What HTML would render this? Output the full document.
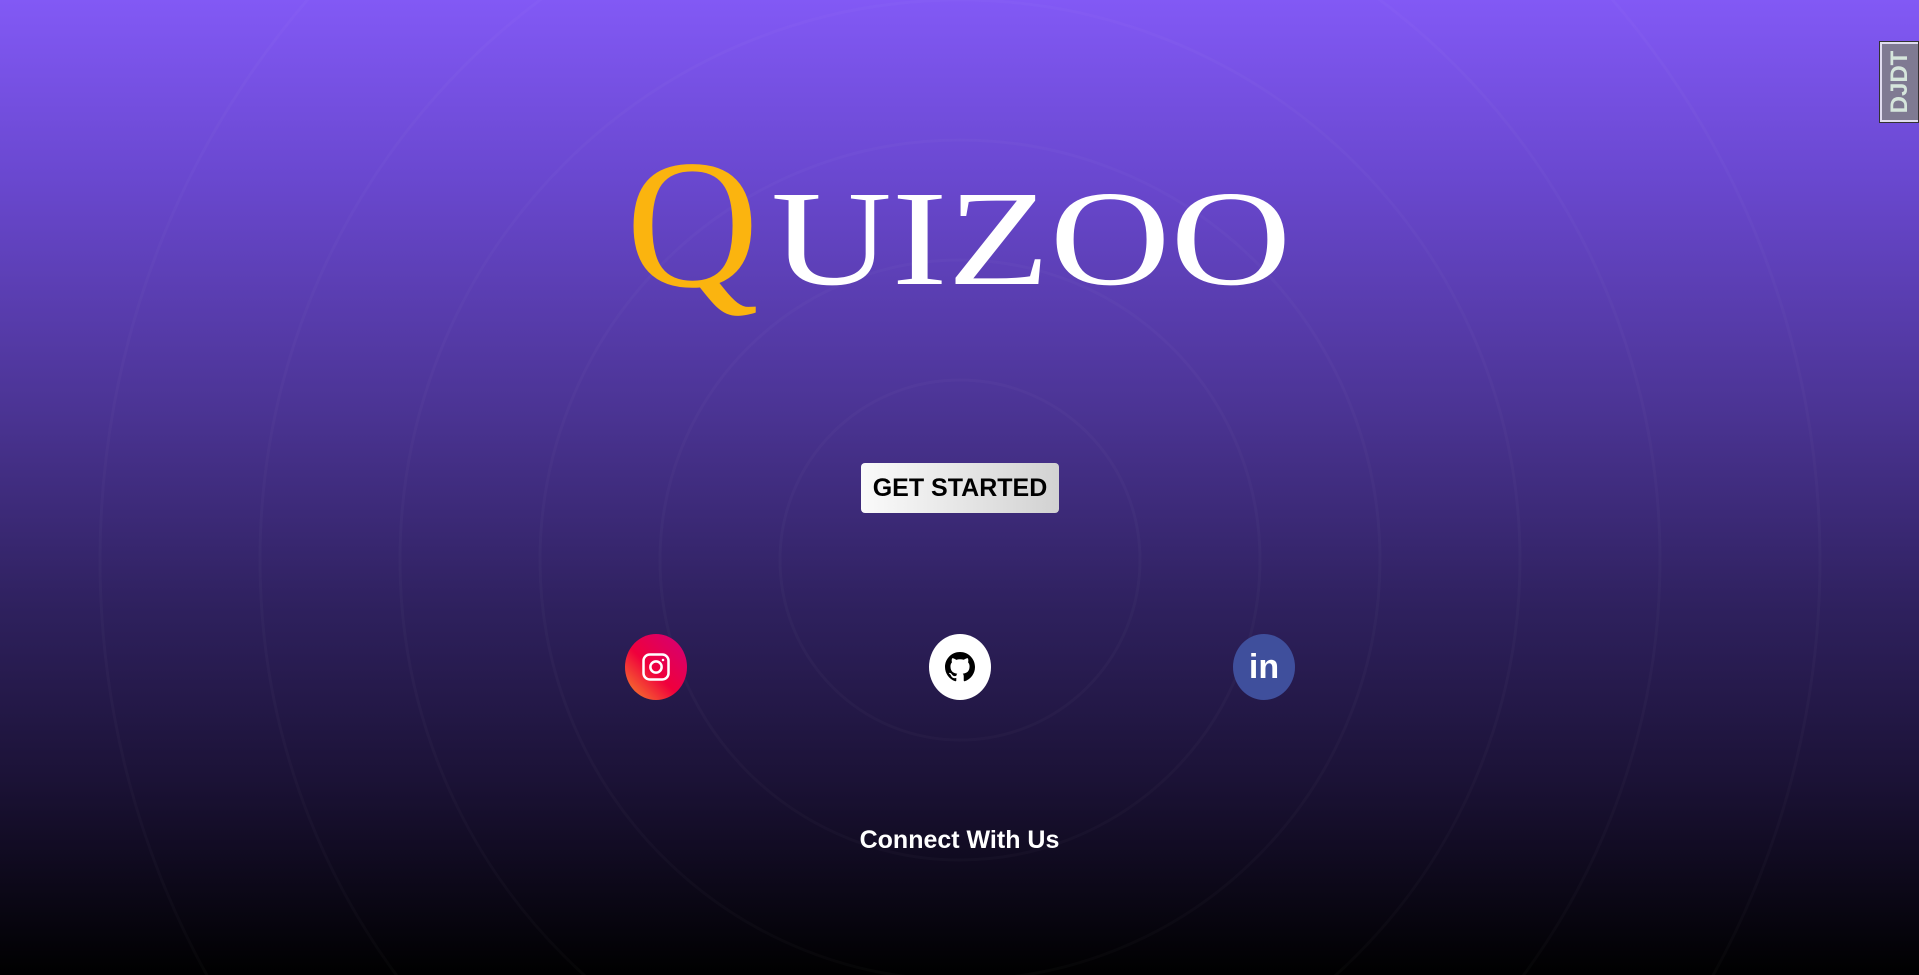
<!DOCTYPE html>
<html><head><meta charset="utf-8"><style>
html,body{margin:0;padding:0;width:1919px;height:975px;overflow:hidden}
body{background:linear-gradient(180deg,#8259f5 0%,#6a48d0 18%,#4b3494 42%,#2f215f 62%,#1b1236 80%,#000 100%);position:relative;font-family:"Liberation Sans",sans-serif}
.rings{position:absolute;left:0;top:0}
.q,.r{position:absolute;font-family:"Liberation Serif",serif;line-height:1;white-space:nowrap}
.q{left:626px;top:132px;color:#fbb40f;font-size:184px}
.r{left:771px;top:171px;color:#fff;font-size:136px;transform:scaleX(1.23);transform-origin:0 0}
.btn{position:absolute;left:861px;top:463px;width:198px;height:50px;border-radius:4px;background:linear-gradient(90deg,#fafafa,#d2d2d2);font-weight:bold;font-size:25px;color:#000;text-align:center;line-height:50px}
.ic{position:absolute;top:634px;width:62px;height:66px;border-radius:50%;display:flex;align-items:center;justify-content:center}
.cw{position:absolute;left:0;width:1919px;top:825px;text-align:center;color:#fff;font-weight:bold;font-size:25px;line-height:30px}
.dj{position:absolute;left:1880px;top:42px;width:36px;height:76px;background:#7f7a92;border:2px solid #e0dcef;border-right:none;box-shadow:0 0 0 1px #333}
.dj span{position:absolute;left:50%;top:50%;transform:translate(-50%,-50%) rotate(-90deg);color:#d6e6dc;font-weight:bold;font-size:24px;white-space:nowrap}
</style></head><body>
<svg class="rings" width="1919" height="975"><g fill="none" stroke="#fff" stroke-opacity="0.025" stroke-width="3">
<circle cx="960" cy="560" r="180"/><circle cx="960" cy="560" r="300"/><circle cx="960" cy="560" r="420"/><circle cx="960" cy="560" r="560"/><circle cx="960" cy="560" r="700"/><circle cx="960" cy="560" r="860"/></g></svg>
<div class="q">Q</div>
<div class="r">UIZOO</div>
<div class="btn">GET STARTED</div>
<div class="ic" style="left:625px;background:linear-gradient(225deg,#d1007a,#f0003c 55%,#f78c2a)">
<svg width="30" height="30" viewBox="0 0 24 24" fill="none" stroke="#fff" stroke-width="2"><rect x="2" y="2" width="20" height="20" rx="5"/><circle cx="12" cy="12" r="4.5"/><circle cx="17.6" cy="6.4" r="1" fill="#fff" stroke="none"/></svg></div>
<div class="ic" style="left:929px;background:#fff">
<svg width="30" height="30" viewBox="0 0 16 16"><path fill="#000" d="M8 0C3.58 0 0 3.58 0 8c0 3.540 2.290 6.530 5.470 7.590.4.07.55-.17.55-.38v-1.330c-2.230.48-2.700-1.070-2.700-1.070-.36-.92-.89-1.170-.89-1.170-.73-.5.06-.49.06-.49.8.06 1.230.83 1.230.83.72 1.220 1.870.87 2.330.66.07-.52.28-.87.5-1.070-1.780-.2-3.640-.89-3.640-3.950 0-.87.31-1.590.82-2.150-.08-.2-.36-1.020.08-2.120 0 0 .67-.21 2.200.82A7.700 7.700 0 0 1 8 3.870c.68 0 1.360.09 2 .27 1.530-1.040 2.200-.82 2.200-.82.44 1.100.16 1.920.08 2.120.51.56.82 1.270.82 2.150 0 3.070-1.870 3.750-3.650 3.950.29.25.54.73.54 1.480v2.200c0 .21.15.46.55.38A8 8 0 0 0 16 8c0-4.420-3.580-8-8-8z"/></svg></div>
<div class="ic" style="left:1233px;background:#3f4f9c;color:#fff;font-weight:bold;font-size:34px;line-height:1">in</div>
<div class="cw">Connect With Us</div>
<div class="dj"><span>DJDT</span></div>
</body></html>
